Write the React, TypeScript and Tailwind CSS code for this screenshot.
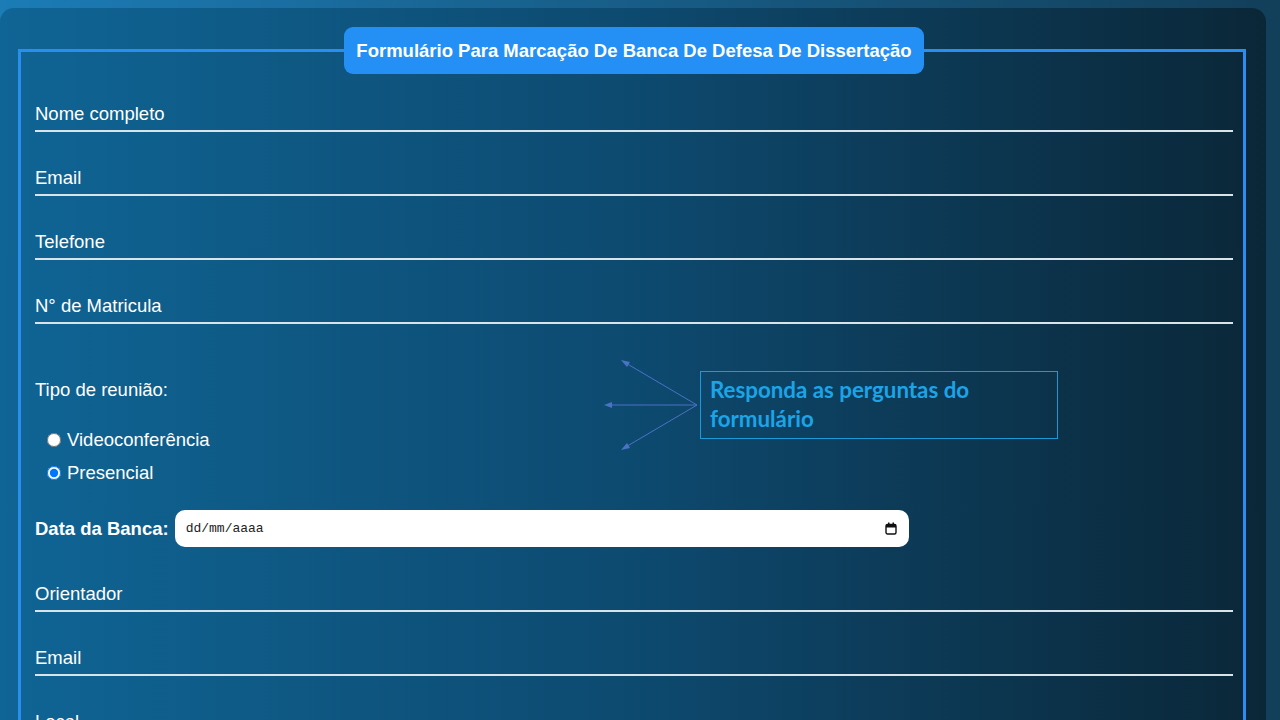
import React from "react";

const fieldCls =
  "block w-full h-[42px] pt-3 pb-1 px-0 bg-transparent border-0 border-b-2 border-[#d9e3ea] text-[18.5px] text-white placeholder:text-white outline-none";

const TextField = ({ label, first }: { label: string; first?: boolean }) => (
  <input type="text" placeholder={label} className={`${fieldCls} ${first ? "mt-0" : "mt-[22px]"}`} />
);

const Annotation = () => (
  <div className="absolute left-[604px] top-[358px] pointer-events-none">
    <svg width="100" height="95" viewBox="604 358 100 95" className="absolute left-0 top-0">
      <g stroke="#4a73c4" strokeWidth="1" fill="#4a73c4">
        <line x1="697" y1="405" x2="624" y2="362" />
        <line x1="697" y1="405" x2="607" y2="405" />
        <line x1="697" y1="405" x2="624" y2="448" />
        <polygon points="621,360 630,362 627,367" stroke="none" />
        <polygon points="604,405 612,402 612,408" stroke="none" />
        <polygon points="621,450 627,443 630,448" stroke="none" />
      </g>
    </svg>
    <div className="absolute left-[96px] top-[13px] w-[358px] h-[68px] border border-[#1c9ad8] px-[9px] pt-[3px] font-['Lato','Open_Sans',sans-serif] font-bold text-[22.3px] leading-[29px] text-[#1ba4e8]">
      Responda as perguntas do formulário
    </div>
  </div>
);

export default function App() {
  return (
    <div className="relative h-[720px] w-[1280px] overflow-hidden bg-gradient-to-r from-[#1b7cb6] to-[#123f5a] pt-2 pr-[14px] font-['Liberation_Sans',Arial,sans-serif]">
      <div className="h-[760px] rounded-[14px] bg-gradient-to-r from-[#0f6595] via-[#0d4a70] to-[#0a2738] pl-[18px] pr-[20px] pt-[19px]">
        <fieldset className="border-[3px] border-[#2a8df0] pl-[14px] pr-[10px] pb-6 pt-[16px] min-w-0">
          <legend className="mx-auto rounded-[9px] bg-[#2490f5] px-[12px] h-[47px] flex items-center text-[18.5px] font-bold text-white">
            Formulário Para Marcação De Banca De Defesa De Dissertação
          </legend>
          <TextField label="Nome completo" first />
          <TextField label="Email" />
          <TextField label="Telefone" />
          <TextField label="N° de Matricula" />

          <p className="mt-[54px] text-[18.5px] leading-6 text-white">Tipo de reunião:</p>
          <div className="mt-[27px] pl-3 flex flex-col gap-[11px]">
            <label className="flex items-center gap-[6px] h-[22px] text-[18.5px] text-white">
              <input type="radio" name="tipo" className="m-0 w-[14px] h-[14px]" />
              Videoconferência
            </label>
            <label className="flex items-center gap-[6px] h-[22px] text-[18.5px] text-white">
              <input type="radio" name="tipo" defaultChecked className="m-0 w-[14px] h-[14px]" />
              Presencial
            </label>
          </div>

          <div className="mt-[26px] flex items-center gap-[6px]">
            <span className="text-[18.5px] font-bold text-white">Data da Banca:</span>
            <div className="flex items-center justify-between w-[734px] h-[37px] rounded-[10px] bg-white pl-[11px] pr-[12px]">
              <span className="font-['Liberation_Mono',monospace] text-[13px] text-[#222]">dd/mm/aaaa</span>
              <svg width="12" height="13" viewBox="0 0 12 13">
                <rect x="1" y="2.5" width="10" height="9.5" rx="1.5" fill="none" stroke="#111" strokeWidth="1.4" />
                <rect x="1" y="2.5" width="10" height="3" fill="#111" />
                <rect x="3" y="0.5" width="1.5" height="3" fill="#111" />
                <rect x="7.5" y="0.5" width="1.5" height="3" fill="#111" />
              </svg>
            </div>
          </div>

          <div className="pt-px">
            <TextField label="Orientador" />
          </div>
          <TextField label="Email" />
          <TextField label="Local" />
        </fieldset>
      </div>
      <Annotation />
    </div>
  );
}
